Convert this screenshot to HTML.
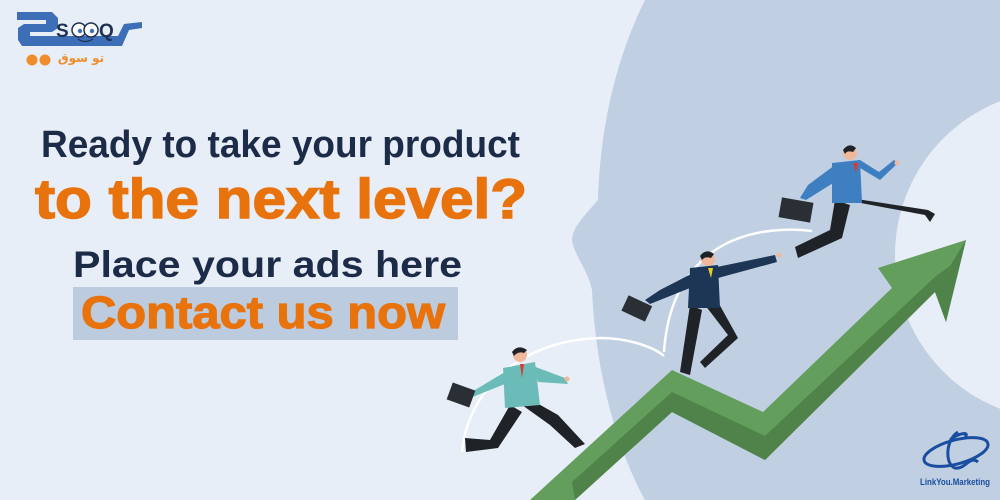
<!DOCTYPE html>
<html><head><meta charset="utf-8"><style>
html,body{margin:0;padding:0;width:1000px;height:500px;overflow:hidden;background:#e8eef7}
svg{display:block}
.ar{position:absolute;left:56px;top:51px;font-family:"DejaVu Sans",sans-serif;font-size:12px;font-weight:bold;color:#ef8c2c;direction:rtl;width:50px;text-align:center;white-space:nowrap;line-height:14px}
</style></head><body>
<svg width="1000" height="500" viewBox="0 0 1000 500" xmlns="http://www.w3.org/2000/svg">
<rect width="1000" height="500" fill="#e8eef7"/>
<path d="M645 0 C615 60 600 130 598 200 C585 215 572 228 572 240 C574 255 588 270 592 290 C595 360 612 440 645 500 L1000 500 L1000 0 Z" fill="#c0cfe2"/>
<circle cx="1060" cy="255" r="165" fill="#e8eef7"/>
<path d="M462 452 C468 390 520 340 600 338 C630 338 655 348 664 356" fill="none" stroke="#fff" stroke-width="2.5"/>
<path d="M664 352 C668 290 700 235 780 230 C795 229 805 230 812 231" fill="none" stroke="#fff" stroke-width="2.5"/>
<path d="M530 500 L672 370 L763 412 L892 288 L878 268 L966 240 L946 322 L935 292 L765 460 L672 412 L575 500 Z" fill="#639e5c"/>
<path d="M672 412 L765 460 L935 292 L946 322 L966 240 L950 266 L936 276 L765 436 L672 392 L572 482 L575 500 Z" fill="#4f8349"/>
<g>
<path d="M510 405 L490 440 L465 438 L466 452 L498 448 L522 412 Z" fill="#1f2226"/>
<path d="M522 405 L550 425 L575 448 L585 444 L558 415 L535 402 Z" fill="#1f2226"/>
<path d="M503 368 L535 362 L540 405 L505 408 Z" fill="#6bbcb8"/>
<path d="M533 366 L565 378 L568 384 L538 382 Z" fill="#6bbcb8"/>
<path d="M508 370 L475 390 L470 398 L510 382 Z" fill="#6bbcb8"/>
<rect x="449" y="386" width="24" height="18" fill="#2a2e35" transform="rotate(20 461 395)"/>
<circle cx="520" cy="355" r="7" fill="#f0b89a"/>
<path d="M512 352 Q518 344 527 350 L524 353 Q518 351 514 356 Z" fill="#1f2226"/>
<path d="M520 364 L522 378 L524 364 Z" fill="#d83a30"/>
<circle cx="567" cy="379" r="2.5" fill="#f0b89a"/>
</g>
<g>
<path d="M690 305 L680 372 L690 375 L702 310 Z" fill="#1f2226"/>
<path d="M705 305 L728 335 L700 362 L705 368 L738 338 L718 302 Z" fill="#1f2226"/>
<path d="M690 268 L718 265 L720 308 L688 308 Z" fill="#1d3656"/>
<path d="M712 268 L775 255 L777 262 L718 278 Z" fill="#1d3656"/>
<path d="M695 272 L660 290 L645 300 L650 304 L695 286 Z" fill="#1d3656"/>
<rect x="624" y="300" width="26" height="17" fill="#2a2e35" transform="rotate(25 637 308)"/>
<circle cx="708" cy="259" r="7" fill="#f0b89a"/>
<path d="M700 256 Q706 248 714 254 L711 258 Q705 256 702 260 Z" fill="#1f2226"/>
<path d="M708 268 L711 278 L713 268 Z" fill="#e3d126"/>
<circle cx="779" cy="255" r="2.5" fill="#f0b89a"/>
</g>
<g>
<path d="M835 200 L830 230 L795 247 L798 258 L842 238 L850 205 Z" fill="#1f2226"/>
<path d="M845 200 L925 215 L930 222 L935 214 L928 210 L850 198 Z" fill="#1f2226"/>
<path d="M832 163 L860 160 L862 203 L832 203 Z" fill="#3e7fc2"/>
<path d="M855 165 L880 180 L898 163 L894 160 L879 172 L860 160 Z" fill="#3e7fc2"/>
<path d="M835 165 L808 185 L800 198 L806 200 L838 180 Z" fill="#3e7fc2"/>
<rect x="780" y="200" width="32" height="20" fill="#2a2e35" transform="rotate(10 796 210)"/>
<circle cx="850" cy="153" r="7" fill="#f0b89a"/>
<path d="M843 150 Q849 142 856 148 L853 152 Q847 150 845 154 Z" fill="#1f2226"/>
<path d="M853 163 L856 173 L858 163 Z" fill="#d83a30"/>
<circle cx="897" cy="163" r="2.5" fill="#f0b89a"/>
</g>
<g fill="none" stroke="#1a4ea0" stroke-width="3">
<ellipse cx="956" cy="452" rx="33" ry="12" transform="rotate(-15 956 452)"/>
<path d="M958 432 C945 440 945 465 955 468 C965 470 970 455 978 462"/>
<path d="M950 440 C960 432 970 432 965 437"/>
</g>
<text x="920" y="485" font-family="Liberation Sans, sans-serif" font-weight="bold" font-size="9.5" fill="#1a4ea0" textLength="70" lengthAdjust="spacingAndGlyphs">LinkYou.Marketing</text>
<g>
<path d="M17 12 L52 12 L58 18 L58 28 L52 32 L30 32 L30 36 L118 36 L124 24 L142 22 L142 28 L129 30 L122 46 L22 46 L18 40 L18 28 L24 24 L46 24 L46 20 L17 20 Z" fill="#3d6fb8"/>
<text x="56" y="37" font-family="Liberation Sans, sans-serif" font-weight="bold" font-size="19" fill="#1e3250">S</text>
<circle cx="79" cy="30" r="7" fill="#fff" stroke="#1e3250" stroke-width="1.5"/>
<circle cx="91" cy="30" r="7" fill="#fff" stroke="#1e3250" stroke-width="1.5"/>
<circle cx="80" cy="31" r="2.2" fill="#3d6fb8"/><circle cx="92" cy="31" r="2.2" fill="#3d6fb8"/>
<path d="M78 39 Q85 44 93 39" fill="none" stroke="#1e3250" stroke-width="1.3"/>
<text x="99" y="37" font-family="Liberation Sans, sans-serif" font-weight="bold" font-size="19" fill="#1e3250">Q</text>
<circle cx="32" cy="60" r="5.5" fill="#ef8c2c"/>
<circle cx="45" cy="60" r="5.5" fill="#ef8c2c"/>
</g>
<text x="41" y="157" font-family="Liberation Sans, sans-serif" font-weight="bold" font-size="38" fill="#1c2b47" textLength="479" lengthAdjust="spacingAndGlyphs">Ready to take your product</text>
<text x="35" y="218" font-family="Liberation Sans, sans-serif" font-weight="bold" font-size="56" fill="#e8720c" stroke="#e8720c" stroke-width="1.5" textLength="492" lengthAdjust="spacingAndGlyphs">to the next level?</text>
<text x="73" y="277" font-family="Liberation Sans, sans-serif" font-weight="bold" font-size="37" fill="#1c2b47" textLength="389" lengthAdjust="spacingAndGlyphs">Place your ads here</text>
<rect x="73" y="287" width="385" height="53" fill="#bccbde"/>
<text x="81" y="328" font-family="Liberation Sans, sans-serif" font-weight="bold" font-size="45" fill="#e8720c" stroke="#e8720c" stroke-width="1.2" textLength="364" lengthAdjust="spacingAndGlyphs">Contact us now</text>
</svg>
<div class="ar">تو سوق</div>
</body></html>
